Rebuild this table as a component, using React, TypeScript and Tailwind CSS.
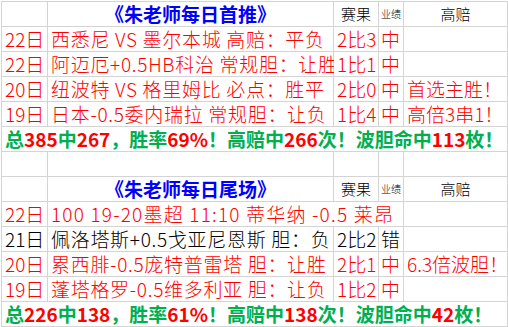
const RED = "text-[#ff0000]";

type Row = {
  date: string;
  match: string;
  score: string;
  result: string;
  odds: string;
  black?: boolean;
};

const TOP: Row[] = [
  { date: "22日", match: "西悉尼 VS 墨尔本城 高赔：平负", score: "2比3", result: "中", odds: "" },
  { date: "22日", match: "阿迈厄+0.5HB科治 常规胆：让胜", score: "1比1", result: "中", odds: "" },
  { date: "20日", match: "纽波特 VS 格里姆比 必点：胜平", score: "2比0", result: "中", odds: "首选主胜！" },
  { date: "19日", match: "日本-0.5委内瑞拉 常规胆：让负", score: "1比4", result: "中", odds: "高倍3串1！" },
];

const BOTTOM: Row[] = [
  { date: "21日", match: "佩洛塔斯+0.5戈亚尼恩斯 胆：负", score: "2比2", result: "错", odds: "", black: true },
  { date: "20日", match: "累西腓-0.5庞特普雷塔 胆：让胜", score: "2比1", result: "中", odds: "6.3倍波胆！" },
  { date: "19日", match: "蓬塔格罗-0.5维多利亚 胆：让负", score: "1比2", result: "中", odds: "" },
];

const cell = "bg-white flex items-center whitespace-nowrap overflow-visible";

function Title({ text }: { text: string }) {
  return (
    <>
      <div className={cell} />
      <div className={`${cell} justify-center font-bold text-[19px] text-[#0000ff]`}>{text}</div>
      <div className={`${cell} justify-center text-[15px] text-black`}>赛果</div>
      <div className={`${cell} justify-center text-[10px] text-black`}>业绩</div>
      <div className={`${cell} justify-center text-[15px] text-black`}>高赔</div>
    </>
  );
}

function DataRow({ row }: { row: Row }) {
  const color = row.black ? "text-black" : RED;
  return (
    <>
      <div className={`${cell} ${color} pl-[3px]`}>{row.date}</div>
      <div className={`${cell} ${color} pl-[3px] tracking-[0.7px]`}>{row.match}</div>
      <div className={`${cell} ${color} pl-[3px]`}>{row.score}</div>
      <div className={`${cell} ${color} pl-[2px]`}>{row.result}</div>
      <div className={`${cell} ${color} pl-[3px]`}>{row.odds}</div>
    </>
  );
}

// 总计行：汉字绿色，数字红色
function Total({ parts }: { parts: string[] }) {
  return (
    <div className={`${cell} col-span-5 pl-[3px] font-bold`}>
      {parts.map((p, i) => (
        <span key={i} className={i % 2 === 0 ? "text-[#00b050]" : RED}>
          {p}
        </span>
      ))}
    </div>
  );
}

export default function App() {
  return (
    <div
      className="bg-white w-[508px] h-[327px] overflow-hidden"
      style={{ fontFamily: '"Noto Sans CJK SC", "Noto Sans", sans-serif' }}
    >
      <div className="ml-px mt-px w-fit grid grid-cols-[45px_285px_44px_24px_103px] auto-rows-[24px] gap-px bg-[#d4d4d4] p-px text-[19px] leading-[24px] font-light">
        <Title text="《朱老师每日首推》" />
        {TOP.map((r, i) => (
          <DataRow key={i} row={r} />
        ))}
        <Total parts={["总", "385", "中", "267", "，胜率", "69%", "！高赔中", "266", "次！波胆命中", "113", "枚！"]} />

        {/* 空行 */}
        <div className={cell} />
        <div className={cell} />
        <div className={cell} />
        <div className={cell} />
        <div className={cell} />

        <Title text="《朱老师每日尾场》" />
        <div className={`${cell} ${RED} pl-[3px]`}>22日</div>
        <div className={`${cell} col-span-3 ${RED} pl-[3px] tracking-[1.2px]`}>100 19-20墨超 11:10 蒂华纳 -0.5 莱昂</div>
        <div className={cell} />
        {BOTTOM.map((r, i) => (
          <DataRow key={i} row={r} />
        ))}
        <Total parts={["总", "226", "中", "138", "，胜率", "61%", "！高赔中", "138", "次！波胆命中", "42", "枚！"]} />
      </div>
    </div>
  );
}
